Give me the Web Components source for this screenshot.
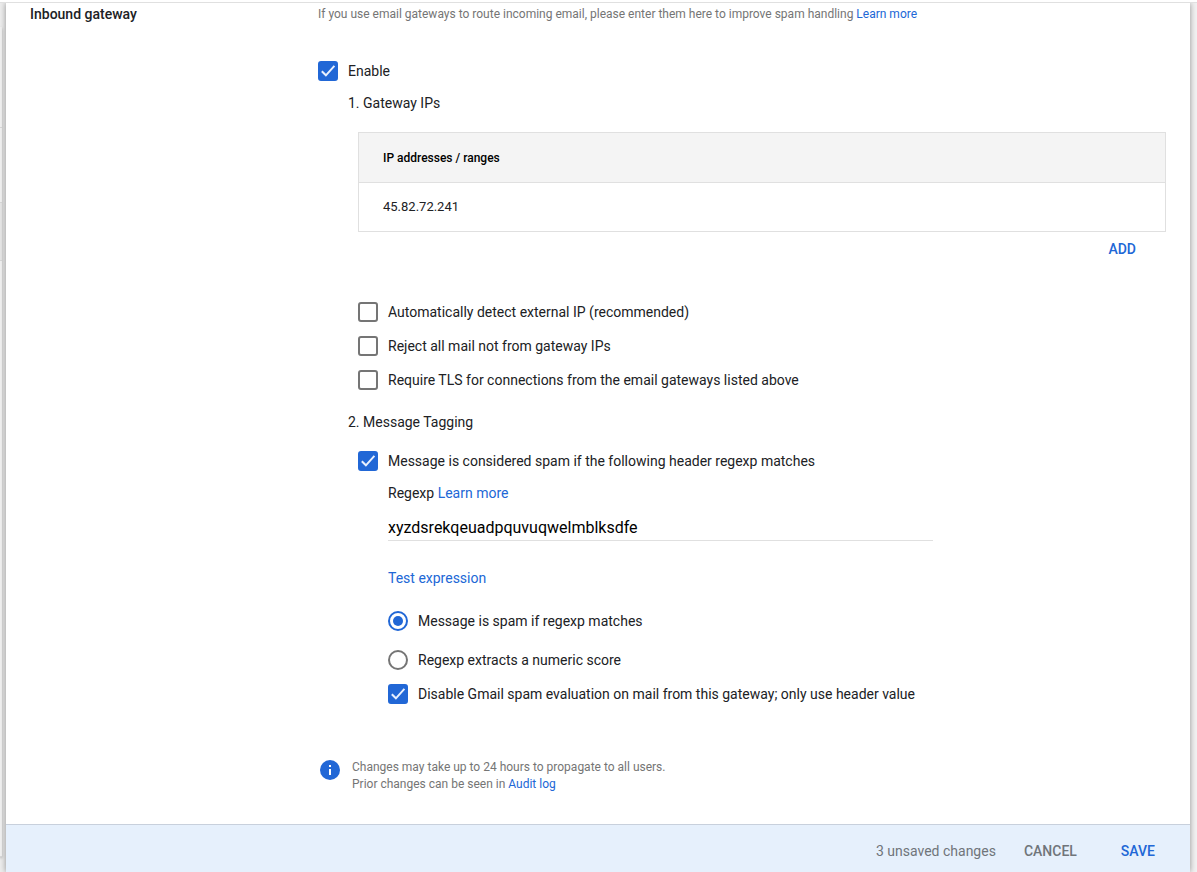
<!DOCTYPE html>
<html lang="en">
<head>
<meta charset="utf-8">
<title>Inbound gateway</title>
<style>
  html, body {
    margin: 0;
    height: 100%;
  }
  body {
    display: flex;
    flex-direction: column;
    box-sizing: border-box;
    border-top: 2px solid #fff;
    font-family: Roboto, "Liberation Sans", sans-serif;
    font-size: 14px;
    line-height: 20px;
    color: #202124;
    background: #f1f1f1;
    --blue: #2167d6;
    --muted: #757575;
    --line: #e0e0e0;
  }
</style>
</head>
<body>
<gateway-page></gateway-page>

<script>
  const linkStyle = `
    a {
      color: var(--blue);
      text-decoration: none;
    }
  `;

  // checkbox or radio with its label, the label text comes from the slot
  class OptionField extends HTMLElement {
    constructor() {
      super();
      this.attachShadow({ mode: 'open' });
    }

    connectedCallback() {
      const type = this.getAttribute('type') || 'checkbox';
      const checked = this.hasAttribute('checked') ? 'checked' : '';
      this.shadowRoot.innerHTML = `
        <style>
          :host {
            display: flex;
          }
          label {
            display: flex;
            align-items: center;
            gap: 10px;
            cursor: pointer;
          }
          .box {
            display: grid;
            flex: none;
            width: 20px;
            height: 20px;
          }
          input, svg {
            grid-area: 1 / 1;
            width: 20px;
            height: 20px;
            margin: 0;
          }
          input {
            appearance: none;
            box-sizing: border-box;
            border: 2px solid var(--muted);
            border-radius: 3px;
          }
          input[type=radio] {
            border-radius: 50%;
          }
          input:checked {
            border-color: var(--blue);
          }
          input[type=checkbox]:checked {
            background: var(--blue);
          }
          svg {
            display: none;
            pointer-events: none;
          }
          input:checked + svg {
            display: block;
          }
        </style>
        <label>
          <span class="box">
            <input type="${type}" ${checked}>
            <svg viewBox="0 0 20 20" aria-hidden="true">
              ${type === 'radio'
                ? '<circle cx="10" cy="10" r="5" fill="#2167d6"/>'
                : '<path d="M3.8 10.2l4.1 4.1 8.5-9.4" fill="none" stroke="#e8f0fe" stroke-width="2"/>'}
            </svg>
          </span>
          <span><slot></slot></span>
        </label>
      `;
    }
  }
  customElements.define('option-field', OptionField);

  class TextAction extends HTMLElement {
    constructor() {
      super();
      this.attachShadow({ mode: 'open' }).innerHTML = `
        <style>
          :host {
            display: block;
            color: var(--blue);
          }
          button {
            display: block;
            height: 34px;
            padding: 0;
            border: 0;
            background: none;
            font: inherit;
            font-weight: 500;
            color: inherit;
            cursor: pointer;
          }
        </style>
        <button type="button"><slot></slot></button>
      `;
    }
  }
  customElements.define('text-action', TextAction);

  class IpTable extends HTMLElement {
    constructor() {
      super();
      this.attachShadow({ mode: 'open' });
    }

    connectedCallback() {
      const rows = this.getAttribute('ips').split(',');
      this.shadowRoot.innerHTML = `
        <style>
          :host {
            display: block;
          }
          table {
            width: 100%;
            border-collapse: collapse;
            border: 1px solid var(--line);
          }
          th, td {
            padding: 0 24px;
            text-align: left;
            border-bottom: 1px solid var(--line);
          }
          th {
            height: 49px;
            background: #f4f4f4;
            color: #000;
            font-size: 12px;
            font-weight: 500;
          }
          td {
            height: 48px;
            font-size: 13px;
          }
        </style>
        <table>
          <thead><tr><th scope="col">IP addresses / ranges</th></tr></thead>
          <tbody>${rows.map((ip) => `<tr><td>${ip}</td></tr>`).join('')}</tbody>
        </table>
      `;
    }
  }
  customElements.define('ip-table', IpTable);

  class RegexpField extends HTMLElement {
    constructor() {
      super();
      this.attachShadow({ mode: 'open' });
    }

    connectedCallback() {
      this.shadowRoot.innerHTML = `
        <style>
          :host {
            display: block;
          }
          input {
            display: block;
            box-sizing: border-box;
            width: 70%;
            height: 27px;
            margin-top: 11px;
            padding: 0;
            border: 0;
            border-bottom: 1px solid var(--line);
            outline: 0;
            background: none;
            font: inherit;
            font-size: 16px;
            color: #000;
          }
          ${linkStyle}
        </style>
        <label for="regexp">Regexp</label> <a href="#regexp-help">Learn more</a>
        <input id="regexp" type="text" spellcheck="false" value="${this.getAttribute('value')}">
      `;
    }
  }
  customElements.define('regexp-field', RegexpField);

  class InfoNote extends HTMLElement {
    constructor() {
      super();
      this.attachShadow({ mode: 'open' }).innerHTML = `
        <style>
          :host {
            display: flex;
            gap: 12px;
            font-size: 12px;
            line-height: 17px;
            color: var(--muted);
          }
          svg {
            flex: none;
            width: 20px;
            height: 20px;
            margin-top: 1px;
          }
        </style>
        <svg viewBox="0 0 20 20" aria-hidden="true">
          <circle cx="10" cy="10" r="10" fill="#2167d6"/>
          <path d="M9 5h2v2H9zM9 9h2v6H9z" fill="#fff"/>
        </svg>
        <div><slot></slot></div>
      `;
    }
  }
  customElements.define('info-note', InfoNote);

  class SaveBar extends HTMLElement {
    constructor() {
      super();
      this.attachShadow({ mode: 'open' }).innerHTML = `
        <style>
          :host {
            display: flex;
            align-items: center;
            justify-content: flex-end;
            box-sizing: border-box;
            min-height: 48px;
            padding: 4px 35px 0 24px;
            border-top: 1px solid #c8d0dc;
            background: #e6f0fc;
            color: #70757a;
          }
          .cancel {
            margin: 0 44px 0 28px;
            color: #70757a;
          }
        </style>
        <slot></slot>
        <text-action class="cancel">CANCEL</text-action>
        <text-action>SAVE</text-action>
      `;
    }
  }
  customElements.define('save-bar', SaveBar);

  // edge of the list that lies under the open panel
  class PageEdge extends HTMLElement {
    constructor() {
      super();
      this.attachShadow({ mode: 'open' }).innerHTML = `
        <style>
          :host {
            display: flex;
            box-sizing: border-box;
            padding: 24px 4px 15px 0;
            background: #ededed;
          }
          .list {
            flex: 1;
            display: flex;
            flex-direction: column;
            border-top-right-radius: 2px;
            box-shadow: 0 1px 3px rgba(0, 0, 0, 0.3);
          }
          .list div {
            border-bottom: 1px solid #d8d8d8;
            background: #f1f1f1;
          }
          .head { height: 100px; }
          .item { height: 74px; }
          .list .current { height: 57px; background: #e6e6e6; }
          .rest { flex: 1; }
        </style>
        <div class="list">
          <div class="head"></div>
          <div class="item"></div>
          <div class="current"></div>
          <div class="rest"></div>
        </div>
      `;
    }
  }
  customElements.define('page-edge', PageEdge);

  class GatewayPage extends HTMLElement {
    constructor() {
      super();
      this.attachShadow({ mode: 'open' }).innerHTML = `
        <style>
          :host {
            flex: 1 0 auto;
            display: grid;
            grid-template-columns: 6px minmax(0, 1fr) 7px;
            overflow: hidden;
            border-top: 1px solid var(--line);
          }
          main {
            display: flex;
            flex-direction: column;
            z-index: 1;
            background: #fff;
            box-shadow: 0 0 6px rgba(0, 0, 0, 0.4);
          }
          .setting {
            flex: 1;
            display: grid;
            grid-template-columns: 288px minmax(0, 1fr);
            padding: 1px 24px 24px;
          }
          h1, h2, p {
            margin: 0;
            font-size: 14px;
            font-weight: 400;
          }
          h1 {
            font-weight: 500;
          }
          .intro {
            margin: 0 0 37px;
            font-size: 12px;
            color: var(--muted);
          }
          .sub {
            margin-left: 30px;
          }
          .group {
            margin-left: 10px;
          }
          .sub > h2 {
            margin: 12px 0 19px;
          }
          .sub > h2.tagging {
            margin-top: 22px;
          }
          .add {
            display: flex;
            justify-content: flex-end;
            padding-right: 30px;
            margin-bottom: 36px;
          }
          .options {
            display: grid;
            gap: 14px;
          }
          .details {
            margin: 12px 0 0 30px;
          }
          .test {
            margin: 27px 0 23px;
          }
          option-field.score {
            margin: 19px 0 14px;
          }
          info-note {
            margin: 55px 2px 0;
          }
          ${linkStyle}
        </style>
        <page-edge></page-edge>
        <main>
          <section class="setting">
            <h1>Inbound gateway</h1>
            <div>
              <p class="intro">If you use email gateways to route incoming email, please enter them here to improve spam handling <a href="#gateway-help">Learn more</a></p>
              <option-field checked>Enable</option-field>
              <div class="sub">
                <h2>1. Gateway IPs</h2>
                <div class="group">
                  <ip-table ips="45.82.72.241"></ip-table>
                  <div class="add"><text-action>ADD</text-action></div>
                  <div class="options">
                    <option-field>Automatically detect external IP (recommended)</option-field>
                    <option-field>Reject all mail not from gateway IPs</option-field>
                    <option-field>Require TLS for connections from the email gateways listed above</option-field>
                  </div>
                </div>
                <h2 class="tagging">2. Message Tagging</h2>
                <div class="group">
                  <option-field checked>Message is considered spam if the following header regexp matches</option-field>
                  <div class="details">
                    <regexp-field value="xyzdsrekqeuadpquvuqwelmblksdfe"></regexp-field>
                    <p class="test"><a href="#test">Test expression</a></p>
                    <option-field type="radio" checked>Message is spam if regexp matches</option-field>
                    <option-field type="radio" class="score">Regexp extracts a numeric score</option-field>
                    <option-field checked>Disable Gmail spam evaluation on mail from this gateway; only use header value</option-field>
                  </div>
                </div>
              </div>
              <info-note>Changes may take up to 24 hours to propagate to all users.<br>Prior changes can be seen in <a href="#audit">Audit log</a></info-note>
            </div>
          </section>
          <save-bar>3 unsaved changes</save-bar>
        </main>
      `;

      // only one of the two radios can be on
      const radios = [...this.shadowRoot.querySelectorAll('option-field[type=radio]')];
      radios.forEach((radio) => {
        radio.addEventListener('change', () => this.pick(radio, radios));
        radio.addEventListener('click', () => this.pick(radio, radios));
      });
    }

    pick(radio, radios) {
      radios.forEach((other) => {
        other.shadowRoot.querySelector('input').checked = other === radio;
      });
    }
  }
  customElements.define('gateway-page', GatewayPage);
</script>
</body>
</html>
